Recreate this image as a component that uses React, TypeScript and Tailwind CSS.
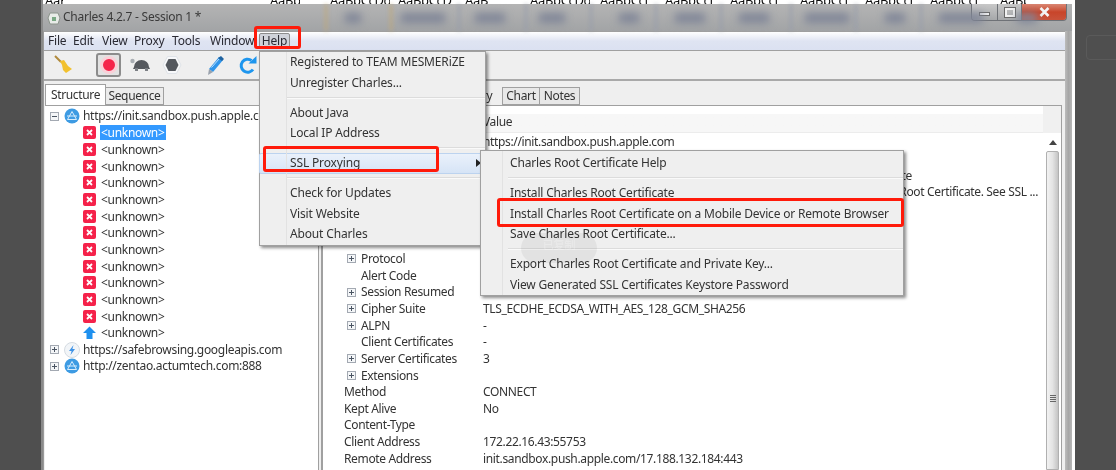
import React from "react";

const ROW = "h-[16.67px] flex items-center whitespace-nowrap";

const ribbonWords = [
  { width: "w-[18px]", ml: "ml-[2px]", text: "AaBbCc" },
  { width: "w-[30px]", ml: "ml-[207px]", text: "AaBbCc" },
  { width: "w-[60px]", ml: "ml-[30px]", text: "AaBbCcDd" },
  { width: "w-[54px]", ml: "ml-[8px]", text: "AaBbCcDd" },
  { width: "w-[50px]", ml: "ml-[13px]", text: "AaB" },
  { width: "w-[60px]", ml: "ml-[15px]", text: "AaBbCcDd" },
  { width: "w-[50px]", ml: "ml-[10px]", text: "AaBbCcDd" },
  { width: "w-[50px]", ml: "ml-[15px]", text: "AaBbCcDd" },
  { width: "w-[50px]", ml: "ml-[15px]", text: "AaBbCcDd" },
  { width: "w-[50px]", ml: "ml-[20px]", text: "AaBbCcDd" },
  { width: "w-[50px]", ml: "ml-[15px]", text: "AaBbCcDd" },
  { width: "w-[50px]", ml: "ml-[15px]", text: "AaBbCcDd" },
  { width: "w-[27px]", ml: "ml-[20px]", text: "AaBbCc" },
];

const titleBlocks = [
  { ml: "ml-[302px]", w: "w-[16px]" },
  { ml: "ml-[40px]", w: "w-[44px]" },
  { ml: "ml-[30px]", w: "w-[30px]" },
  { ml: "ml-[34px]", w: "w-[26px]" },
  { ml: "ml-[54px]", w: "w-[20px]" },
  { ml: "ml-[36px]", w: "w-[30px]" },
  { ml: "ml-[34px]", w: "w-[30px]" },
  { ml: "ml-[36px]", w: "w-[44px]" },
  { ml: "ml-[36px]", w: "w-[20px]" },
  { ml: "ml-[34px]", w: "w-[44px]" },
  { ml: "ml-[34px]", w: "w-[20px]" },
];

const titleSeams = [
  { ml: "ml-[282px]", bg: "bg-[#c2a878]" },
  { ml: "ml-[63px]", bg: "bg-[#c2a878]" },
  { ml: "ml-[66px]", bg: "bg-[#979dab]" },
  { ml: "ml-[65px]", bg: "bg-[#979dab]" },
  { ml: "ml-[63px]", bg: "bg-[#979dab]" },
  { ml: "ml-[63px]", bg: "bg-[#979dab]" },
  { ml: "ml-[63px]", bg: "bg-[#979dab]" },
  { ml: "ml-[68px]", bg: "bg-[#979dab]" },
  { ml: "ml-[63px]", bg: "bg-[#979dab]" },
  { ml: "ml-[63px]", bg: "bg-[#979dab]" },
];

const menuNames = [
  { name: "File", w: "w-[25px]" },
  { name: "Edit", w: "w-[29px]" },
  { name: "View", w: "w-[32px]" },
  { name: "Proxy", w: "w-[38px]" },
  { name: "Tools", w: "w-[38px]" },
  { name: "Window", w: "w-[48px]" },
];

const detailRows: { label: string; value?: string; indent?: boolean; expand?: boolean }[] = [
  { label: "Protocol", indent: true, expand: true },
  { label: "Alert Code", indent: true },
  { label: "Session Resumed", indent: true, expand: true },
  { label: "Cipher Suite", value: "TLS_ECDHE_ECDSA_WITH_AES_128_GCM_SHA256", indent: true, expand: true },
  { label: "ALPN", value: "-", indent: true, expand: true },
  { label: "Client Certificates", value: "-", indent: true },
  { label: "Server Certificates", value: "3", indent: true, expand: true },
  { label: "Extensions", indent: true, expand: true },
  { label: "Method", value: "CONNECT" },
  { label: "Kept Alive", value: "No" },
  { label: "Content-Type" },
  { label: "Client Address", value: "172.22.16.43:55753" },
  { label: "Remote Address", value: "init.sandbox.push.apple.com/17.188.132.184:443" },
];

function ExpandBox({ open = false }: { open?: boolean }) {
  return (
    <svg width="9" height="9" viewBox="0 0 9 9" className="shrink-0">
      <rect x="0.5" y="0.5" width="8" height="8" fill="#f4f6f8" stroke="#a3a9b2" />
      <path d="M2 4.5h5" stroke="#4b5563" />
      {!open && <path d="M4.5 2v5" stroke="#4b5563" />}
    </svg>
  );
}

function ErrorIcon() {
  return (
    <svg width="13" height="13" viewBox="0 0 13 13" className="shrink-0">
      <rect width="13" height="13" rx="2" fill="#f5224a" />
      <path d="M4 4l5 5M9 4l-5 5" stroke="#fff" strokeWidth="1.8" />
    </svg>
  );
}

function UpArrow() {
  return (
    <svg width="13" height="13" viewBox="0 0 13 13" className="shrink-0">
      <path d="M6.5 0.5L13 7H9.5v6h-6V7H0z" fill="#1e90ee" />
    </svg>
  );
}

function GlobeIcon() {
  return (
    <svg width="16" height="16" viewBox="0 0 16 16" className="shrink-0">
      <circle cx="8" cy="8" r="7.5" fill="#3d9be3" />
      <path d="M8 3.5L3.5 11.5h9z" fill="none" stroke="#d8ecfb" />
      <path d="M3 8h10" stroke="#d8ecfb" />
    </svg>
  );
}

function BoltIcon() {
  return (
    <svg width="16" height="16" viewBox="0 0 16 16" className="shrink-0">
      <circle cx="8" cy="8" r="7.5" fill="#f2f5f8" stroke="#d5dbe2" />
      <path d="M9.5 3L5 9h2.6L6.5 13 11 7H8.4z" fill="#3f93e6" />
    </svg>
  );
}

function Broom() {
  return (
    <svg width="20" height="20" viewBox="0 0 20 20">
      <path d="M1 1l6 6" stroke="#b08a3c" strokeWidth="2" />
      <path d="M6 6l4-1 4 6 4 3-6 4-3-3-1-5z" fill="#f2c12e" />
    </svg>
  );
}

function Turtle() {
  return (
    <svg width="21" height="14" viewBox="0 0 21 14">
      <circle cx="2.5" cy="3" r="2.2" fill="#a9aeb3" />
      <path d="M4 9a7.5 7 0 0 1 15 0l1 2H3z" fill="#55595e" />
      <rect x="5" y="10" width="3" height="3" fill="#7c8085" />
      <rect x="15" y="10" width="3" height="3" fill="#7c8085" />
    </svg>
  );
}

function Hexagon() {
  return (
    <svg width="20" height="20" viewBox="0 0 20 20">
      <path d="M5.5 1.5h9L19 10l-4.5 8.5h-9L1 10z" fill="#f7f8fa" stroke="#dfe3e8" />
      <path d="M6.5 4h7l3 6-3 6h-7l-3-6z" fill="#54585e" />
    </svg>
  );
}

function Pen() {
  return (
    <svg width="19" height="21" viewBox="0 0 19 21">
      <path d="M3 14L13 2l4 3L7 17z" fill="#2f95ea" />
      <path d="M5.5 12.5L13 4" stroke="#bfe0fa" strokeWidth="1" />
      <path d="M3 14l4 3-5 3z" fill="#9aa2ad" />
      <path d="M12 3l3-2 3 3-2 2z" fill="#20639f" />
    </svg>
  );
}

function Refresh() {
  return (
    <svg width="19" height="19" viewBox="0 0 19 19">
      <path d="M15 13.5A6.5 6.5 0 1 1 13.5 4.5" fill="none" stroke="#1e96ee" strokeWidth="3" />
      <path d="M10.5 7.5h8V0z" fill="#1e96ee" />
    </svg>
  );
}

function MenuItem({
  label,
  arrow = false,
  active = false,
  sub = false,
}: {
  label: string;
  arrow?: boolean;
  active?: boolean;
  sub?: boolean;
}) {
  return (
    <div
      className={`flex items-center h-[20.5px] pr-[4px] rounded-[2px] ${sub ? "pl-[29px]" : "pl-[30px]"} ${
        active ? "bg-gradient-to-b from-[#eaf1fb] to-[#d6e4f6] border border-[#bcd3ef] -mx-[1px]" : ""
      }`}
    >
      <span>{label}</span>
      {arrow && (
        <svg width="5" height="8" viewBox="0 0 5 8" className="ml-auto">
          <path d="M0 0l5 4-5 4z" fill="#222" />
        </svg>
      )}
    </div>
  );
}

function Separator() {
  return <div className="h-px bg-[#dcdcdc] border-b border-[#fafafa] box-content ml-[27px] my-[3.75px]" />;
}

export default function App() {
  return (
    <div className="relative w-[1116px] h-[470px] overflow-hidden flex bg-[#4f4f4f] blur-[0.35px] font-['Noto_Sans',sans-serif] text-[12px] tracking-[-0.35px] text-[#333]">
      <div className="w-[41px] shrink-0 border-r-[2px] border-[#8a8a8a] box-content" />

      <div className="w-[1029px] shrink-0 flex flex-col">
        {/* clipped bottom of the document behind the window */}
        <div className="h-[4px] bg-white overflow-hidden flex items-end text-[#111] text-[13px] leading-[7px]">
          {ribbonWords.map((w, i) => (
            <span key={i} className={`${w.width} ${w.ml} shrink-0 overflow-hidden whitespace-nowrap`}>
              {w.text}
            </span>
          ))}
        </div>

        <div className="h-[27px] grid bg-gradient-to-b from-[#b4b4b4] to-[#a2a4a6]">
          <div className="[grid-area:1/1] flex blur-[2px] overflow-hidden">
            {titleSeams.map((s, i) => (
              <div key={i} className={`${s.ml} w-[2px] shrink-0 ${s.bg}`} />
            ))}
          </div>
          <div className="[grid-area:1/1] flex items-center blur-[4px] overflow-hidden">
            {titleBlocks.map((b, i) => (
              <div key={i} className={`${b.ml} ${b.w} h-[10px] shrink-0 bg-[#7f8597]`} />
            ))}
          </div>
          <div className="[grid-area:1/1] flex items-start">
            <svg width="14" height="15" viewBox="0 0 14 15" className="ml-[4px] mt-[6px] shrink-0">
              <path d="M3 3h8l2 5-2 6H3L1 8z" fill="#e8ebe8" stroke="#8c948c" />
              <path d="M5 7h4v4H5z" fill="#7aa884" />
            </svg>
            <span className="ml-[2px] mt-[4px] text-[12px] tracking-[-0.25px] text-[#3a3a3a]">Charles 4.2.7 - Session 1 *</span>
            <div className="ml-auto mr-[5px] flex h-[17px] border border-t-0 border-[#6f7277] rounded-b-[4px] overflow-hidden">
              <div className="w-[26px] flex items-center justify-center bg-gradient-to-b from-[#c8c8c8] to-[#a6a8aa] border-r border-[#6f7277]">
                <div className="w-[11px] h-[4px] mt-[4px] bg-[#f2f2f2] border border-[#6a6a6a]" />
              </div>
              <div className="w-[24px] flex items-center justify-center bg-gradient-to-b from-[#c8c8c8] to-[#a6a8aa] border-r border-[#6f7277]">
                <div className="w-[10px] h-[9px] border-2 border-[#f2f2f2] outline outline-1 outline-[#6a6a6a]" />
              </div>
              <div className="w-[44px] flex items-center justify-center bg-gradient-to-b from-[#d98672] via-[#c8452a] to-[#c9523a]">
                <svg width="11" height="10" viewBox="0 0 11 10">
                  <path d="M1.5 1l8 8M9.5 1l-8 8" stroke="#f5f5f5" strokeWidth="2.6" />
                </svg>
              </div>
            </div>
          </div>
        </div>

        <div className="flex-1 flex min-h-0">
          <div className="w-[1022px] shrink-0 flex flex-col bg-[#efefef] border-l border-[#9a9a9a]">
            {/* menu bar */}
            <div className="h-[20px] flex items-center pl-[4px] tracking-[-0.2px] bg-gradient-to-b from-white via-[#dfe4f2] to-[#dbe1f1] border-y border-[#a0a0a0] text-[#2a2a33]">
              {menuNames.map((m) => (
                <span key={m.name} className={m.w}>
                  {m.name}
                </span>
              ))}
              <span className="ml-[1px] h-[16px] w-[31px] flex items-center justify-center bg-[#d0d3da] border border-[#8d8d8d] rounded-[2px]">
                Help
              </span>
            </div>

            {/* toolbar */}
            <div className="h-[30px] flex items-center border-b-[2px] border-[#a9a9a9]">
              <div className="ml-[10px]"><Broom /></div>
              <div className="ml-[22px] w-[25px] h-[24px] flex items-center justify-center bg-[#e2e2e2] border-2 border-[#8c8c8c] rounded-[3px]">
                <div className="w-[18px] h-[18px] rounded-full bg-[#f5234a] border-[3px] border-[#f9d0d8]" />
              </div>
              <div className="ml-[9px]"><Turtle /></div>
              <div className="ml-[11px]"><Hexagon /></div>
              <div className="ml-[24px]"><Pen /></div>
              <div className="ml-[13px]"><Refresh /></div>
            </div>

            <div className="flex-1 flex min-h-0 pt-[3px] pl-[1px]">
              {/* left panel */}
              <div className="w-[273px] shrink-0 flex flex-col">
                <div className="h-[21px] flex items-end">
                  <div className="w-[61px] h-[21px] flex items-center justify-center bg-white border border-b-0 border-[#a0a0a0]">
                    Structure
                  </div>
                  <div className="w-[58px] h-[18px] flex items-center justify-center bg-[#ececec] border border-l-0 border-[#a0a0a0]">
                    Sequence
                  </div>
                </div>
                <div className="flex-1 bg-white pt-[2px] pl-[5px] border-t border-[#a0a0a0] tracking-[-0.3px]">
                  <div className={ROW}>
                    <ExpandBox open />
                    <span className="ml-[5px]"><GlobeIcon /></span>
                    <span className="ml-[3px]">https://init.sandbox.push.apple.com</span>
                  </div>
                  {Array.from({ length: 12 }).map((_, i) => (
                    <div key={i} className={`${ROW} pl-[33px]`}>
                      <ErrorIcon />
                      <span className={`ml-[4px] px-[1px] leading-[15px] ${i === 0 ? "bg-[#3399ff] text-white" : ""}`}>
                        {"<unknown>"}
                      </span>
                    </div>
                  ))}
                  <div className={`${ROW} pl-[33px]`}>
                    <UpArrow />
                    <span className="ml-[4px] px-[1px]">{"<unknown>"}</span>
                  </div>
                  <div className={ROW}>
                    <ExpandBox />
                    <span className="ml-[5px]"><BoltIcon /></span>
                    <span className="ml-[3px]">https://safebrowsing.googleapis.com</span>
                  </div>
                  <div className={ROW}>
                    <ExpandBox />
                    <span className="ml-[5px]"><GlobeIcon /></span>
                    <span className="ml-[3px]">http://zentao.actumtech.com:888</span>
                  </div>
                </div>
              </div>

              {/* splitter */}
              <div className="w-[4px] shrink-0 border-x border-[#a0a0a0] bg-[#efefef]" />

              {/* right panel */}
              <div className="w-[740px] shrink-0 flex flex-col">
                <div className="h-[21px] flex items-end">
                  <div className="ml-[160px] w-[18px] h-[18px] flex items-center">ry</div>
                  <div className="w-[38px] h-[18px] ml-[2px] flex items-center justify-center bg-[#e8e8e8] border border-[#a0a0a0]">Chart</div>
                  <div className="w-[40px] h-[18px] flex items-center justify-center bg-[#e8e8e8] border border-l-0 border-[#a0a0a0]">Notes</div>
                </div>
                <div className="flex-1 min-h-0 flex flex-col border border-b-0 border-[#a0a0a0] bg-white">
                  <div className="h-[27px] shrink-0 flex">
                    <div className="flex-1 pt-[9px] bg-gradient-to-b from-white from-30% to-[#f7f7f7] to-30% border-b border-[#ececec]">
                      <div className="pl-[160px] leading-[13px]">Value</div>
                    </div>
                    <div className="w-[18px] bg-[#f0f0f0]" />
                  </div>
                  <div className="flex-1 min-h-0 flex">
                    <div className="flex-1 min-w-0 overflow-hidden pt-[1px]">
                      <div className={`${ROW} pl-[160px]`}>https://init.sandbox.push.apple.com</div>
                      <div className={ROW} />
                      <div className={`${ROW} justify-end pr-[134px]`}>Charles Root Certificate</div>
                      <div className={`${ROW} justify-end pr-[8px]`}>You may need to trust the Charles Root Certificate. See SSL ...</div>
                      <div className={ROW} />
                      <div className={ROW} />
                      <div className={ROW} />
                      {detailRows.map((r) => (
                        <div key={r.label} className={ROW}>
                          <div className={`w-[160px] shrink-0 flex items-center ${r.indent ? "pl-[24px]" : "pl-[21px]"}`}>
                            {r.indent && <span className="w-[14px] shrink-0">{r.expand && <ExpandBox />}</span>}
                            <span>{r.label}</span>
                          </div>
                          <span>{r.value}</span>
                        </div>
                      ))}
                    </div>
                    {/* scrollbar */}
                    <div className="w-[13px] shrink-0 mr-[2px] flex flex-col">
                      <div className="h-[18px] flex items-center justify-center">
                        <svg width="8" height="5" viewBox="0 0 8 5"><path d="M4 0l4 5H0z" fill="#444" /></svg>
                      </div>
                      <div className="flex-1 relative bg-gradient-to-r from-[#f2f2f2] via-[#e4e4e4] to-[#c4c4c4] border border-[#b0b0b0] rounded-t-[2px]">
                        <div className="absolute left-[3px] top-[243px] w-[6px] flex flex-col gap-[1px]">
                          <div className="h-px bg-[#666]" />
                          <div className="h-px bg-[#666]" />
                          <div className="h-px bg-[#666]" />
                          <div className="h-px bg-[#666]" />
                        </div>
                      </div>
                    </div>
                  </div>
                </div>
              </div>
            </div>
          </div>

          {/* glass frame, right side */}
          <div className="flex-1 bg-gradient-to-r from-[#bcbcbc] via-[#a6a6a6] to-[#b8b8b8]" />
        </div>
      </div>

      <div className="w-[3px] shrink-0 bg-white" />
      <div className="flex-1 pt-[35px] pl-[11px]">
        <div className="h-[25px] w-[40px] rounded-[4px] border border-[#5a5a5a]" />
      </div>

      {/* Help menu */}
      <div className="absolute left-[259px] top-[51px] w-[227px] h-[195px] tracking-[-0.15px] bg-[#efefef] border border-[#a0a0a0] shadow-[2px_2px_3px_rgba(0,0,0,0.45)]">
        <div className="absolute left-[26px] top-0 bottom-0 w-px bg-[#e2e2e2]" />
        <MenuItem label="Registered to TEAM MESMERiZE" />
        <MenuItem label="Unregister Charles..." />
        <Separator />
        <MenuItem label="About Java" />
        <MenuItem label="Local IP Address" />
        <Separator />
        <MenuItem label="SSL Proxying" arrow active />
        <Separator />
        <MenuItem label="Check for Updates" />
        <MenuItem label="Visit Website" />
        <MenuItem label="About Charles" />
      </div>

      {/* SSL Proxying submenu */}
      <div className="absolute left-[480px] top-[150px] w-[424px] h-[146px] py-[2px] tracking-[-0.18px] bg-[#efefef] border border-[#a0a0a0] shadow-[2px_2px_3px_rgba(0,0,0,0.45)]">
        <div className="absolute left-[21px] top-0 bottom-0 w-px bg-[#e2e2e2]" />
        <div className="absolute left-[40px] top-[82px] w-[76px] h-[30px] rounded-full bg-[#0000000d] flex items-start justify-center text-[11px] leading-[22px] text-white/30 font-['Noto_Sans_CJK_SC',sans-serif]">
          已复制
        </div>
        <MenuItem sub label="Charles Root Certificate Help" />
        <Separator />
        <MenuItem sub label="Install Charles Root Certificate" />
        <MenuItem sub label="Install Charles Root Certificate on a Mobile Device or Remote Browser" />
        <MenuItem sub label="Save Charles Root Certificate..." />
        <Separator />
        <MenuItem sub label="Export Charles Root Certificate and Private Key..." />
        <MenuItem sub label="View Generated SSL Certificates Keystore Password" />
      </div>

      {/* red annotation boxes */}
      <div className="absolute left-[254px] top-[26px] w-[47px] h-[23px] border-[3px] border-[#ff1a0a] rounded-[3px]" />
      <div className="absolute left-[263px] top-[146px] w-[176px] h-[26px] border-[3px] border-[#ff1a0a] rounded-[3px]" />
      <div className="absolute left-[497px] top-[198px] w-[407px] h-[29px] border-[3px] border-[#ff1a0a] rounded-[3px]" />
    </div>
  );
}
